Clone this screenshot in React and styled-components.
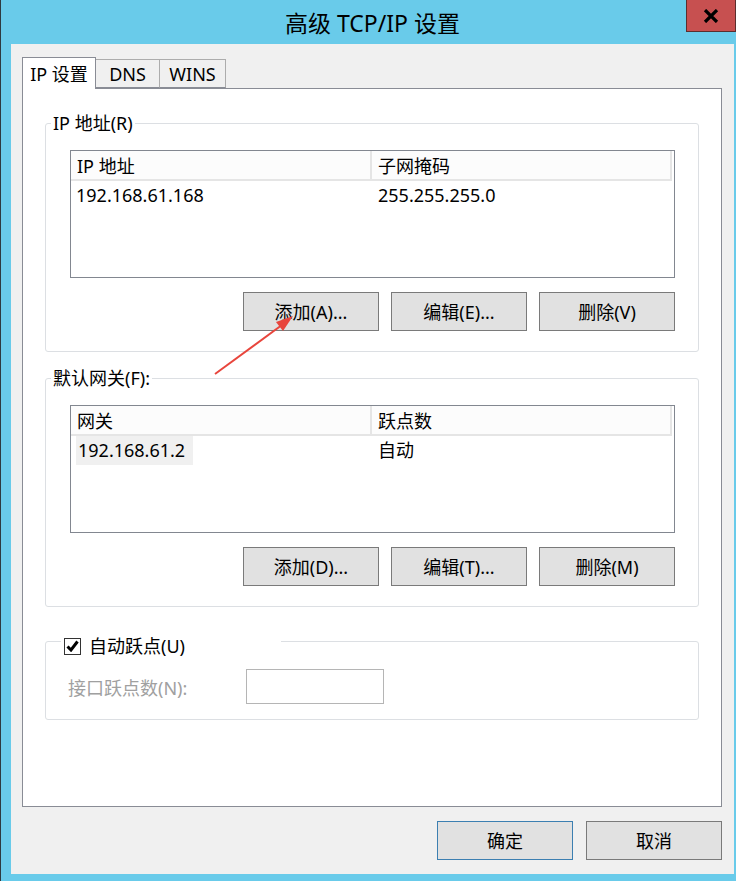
import React from 'react';
import styled, { createGlobalStyle } from 'styled-components';

const GlobalStyle = createGlobalStyle`
  html, body {
    margin: 0;
    padding: 0;
    background: #69cbea;
  }
  body {
    font-family: "Noto Sans", "Noto Sans CJK SC", sans-serif;
    color: #000;
  }
`;

const Window = styled.div`
  position: relative;
  width: 736px;
  height: 881px;
  box-sizing: border-box;
  border-left: 1px solid #2e3a40;
  background: #69cbea;
  overflow: hidden;
`;

const TitleBar = styled.div`
  height: 44px;
  display: flex;
  align-items: center;
  justify-content: center;
  padding-left: 8px;
  font-size: 23px;
`;

const CloseButton = styled.div`
  position: absolute;
  top: 0;
  right: 0;
  width: 50px;
  height: 32px;
  box-sizing: border-box;
  background: #c75050;
  border: 1px solid #5b2e2e;
  border-top: none;
  display: flex;
  align-items: center;
  justify-content: center;
`;

const Client = styled.div`
  margin-left: 10px;
  width: 723px;
  height: 830px;
  box-sizing: border-box;
  background: #f0f0f0;
  padding: 13px 12px 14px 11px;
  display: flex;
  flex-direction: column;
`;

const TabStrip = styled.div`
  display: flex;
  align-items: flex-end;
  height: 31px;
  position: relative;
  z-index: 1;
`;

const Tab = styled.div`
  box-sizing: border-box;
  width: ${({ $w }) => $w}px;
  height: ${({ $active }) => ($active ? 32 : 29)}px;
  margin-bottom: ${({ $active }) => ($active ? -1 : 0)}px;
  margin-left: ${({ $first }) => ($first ? 0 : -1)}px;
  background: ${({ $active }) => ($active ? '#fff' : '#f0f0f0')};
  border: 1px solid ${({ $active }) => ($active ? '#898c95' : '#acacac')};
  border-bottom: ${({ $active }) => ($active ? 'none' : '1px solid #898c95')};
  display: flex;
  align-items: center;
  justify-content: center;
  font-size: 18px;
  line-height: 1;
  z-index: ${({ $active }) => ($active ? 2 : 1)};
`;

const Panel = styled.div`
  height: 719px;
  box-sizing: border-box;
  border: 1px solid #898c95;
  background: #fff;
  padding: 22px 22px 0 22px;
`;

const Group = styled.fieldset`
  margin: ${({ $top }) => $top}px 0 0 0;
  padding: 0;
  min-width: 0;
  border: 1px solid #dcdfe3;
  border-radius: 3px;
`;

const Legend = styled.legend`
  margin-left: ${({ $offset }) => $offset}px;
  padding: 0 2px;
  width: ${({ $w }) => ($w ? `${$w}px` : 'auto')};
  box-sizing: border-box;
  height: 24px;
  line-height: 24px;
  font-size: 18px;
  display: flex;
  align-items: center;
  gap: 8px;
  position: relative;
  top: ${({ $shift }) => $shift || 0}px;
`;

const GroupBody = styled.div`
  padding: 15px 23px 20px 24px;
`;

const List = styled.div`
  height: 128px;
  box-sizing: border-box;
  border: 1px solid #828790;
  background: #fff;
`;

const HeaderRow = styled.div`
  display: flex;
  height: 30px;
  margin-right: 2px;
  background: #fcfcfc;
  border-bottom: 2px solid #e5e5e5;
  box-sizing: border-box;
`;

const HeaderCell = styled.div`
  box-sizing: border-box;
  width: ${({ $w }) => ($w ? `${$w}px` : 'auto')};
  flex: ${({ $w }) => ($w ? 'none' : 1)};
  border-right: 2px solid #e5e5e5;
  padding-left: 6px;
  font-size: 18px;
  line-height: 31px;
`;

const Row = styled.div`
  display: flex;
  height: 28px;
`;

const Cell = styled.div`
  box-sizing: border-box;
  width: ${({ $w }) => ($w ? `${$w}px` : 'auto')};
  flex: ${({ $w }) => ($w ? 'none' : 1)};
  padding-left: ${({ $w }) => ($w ? 5 : 6)}px;
  font-size: 18px;
  line-height: 29px;
`;

const Selected = styled.span`
  display: inline-block;
  background: #f0f0f0;
  padding: 0 8px 0 2px;
`;

const ButtonRow = styled.div`
  display: flex;
  justify-content: flex-end;
  gap: ${({ $gap }) => $gap}px;
  margin-top: 14px;
`;

const Button = styled.div`
  width: 136px;
  height: 39px;
  box-sizing: border-box;
  background: #e1e1e1;
  border: 1px solid ${({ $default }) => ($default ? '#3c7fb1' : '#7a7a7a')};
  display: flex;
  align-items: center;
  justify-content: center;
  font-size: 18px;
  padding-bottom: 2px;
`;

const CheckBox = styled.span`
  width: 17px;
  height: 17px;
  box-sizing: border-box;
  border: 1px solid #333;
  background: #fff;
  display: inline-flex;
  align-items: center;
  justify-content: center;
  margin-left: 1px;
`;

const FieldRow = styled.div`
  display: flex;
  align-items: center;
  padding: 16px 0 15px 22px;
`;

const FieldLabel = styled.span`
  width: 178px;
  font-size: 18px;
  color: #a0a0a0;
`;

const NumberInput = styled.div`
  width: 138px;
  height: 35px;
  box-sizing: border-box;
  border: 1px solid #b5b5b5;
  background: #fff;
`;

const DialogButtons = styled.div`
  display: flex;
  justify-content: flex-end;
  gap: 13px;
  margin-top: 14px;
`;

const Arrow = styled.svg`
  position: absolute;
  left: 205px;
  top: 305px;
  pointer-events: none;
`;

function AddressList({ head1, head2, rows, selectFirst }) {
  return (
    <List>
      <HeaderRow>
        <HeaderCell $w={301}>{head1}</HeaderCell>
        <HeaderCell>{head2}</HeaderCell>
      </HeaderRow>
      {rows.map(([a, b]) => (
        <Row key={a}>
          <Cell $w={301}>{selectFirst ? <Selected>{a}</Selected> : a}</Cell>
          <Cell>{b}</Cell>
        </Row>
      ))}
    </List>
  );
}

export default function App() {
  return (
    <>
      <GlobalStyle />
      <Window>
        <TitleBar>高级 TCP/IP 设置</TitleBar>
        <CloseButton>
          <svg width="16" height="14" viewBox="0 0 16 14">
            <path d="M2 1 L14 13 M14 1 L2 13" stroke="#000" strokeWidth="3.2" />
          </svg>
        </CloseButton>
        <Client>
          <TabStrip>
            <Tab $first $active $w={74}>IP 设置</Tab>
            <Tab $w={65}>DNS</Tab>
            <Tab $w={67}>WINS</Tab>
          </TabStrip>
          <Panel>
            <Group $top={0}>
              <Legend $offset={5}>IP 地址(R)</Legend>
              <GroupBody>
                <AddressList
                  head1="IP 地址"
                  head2="子网掩码"
                  rows={[['192.168.61.168', '255.255.255.0']]}
                />
                <ButtonRow $gap={12}>
                  <Button>添加(A)...</Button>
                  <Button>编辑(E)...</Button>
                  <Button>删除(V)</Button>
                </ButtonRow>
              </GroupBody>
            </Group>
            <Group $top={14}>
              <Legend $offset={5}>默认网关(F):</Legend>
              <GroupBody>
                <AddressList
                  head1="网关"
                  head2="跃点数"
                  rows={[['192.168.61.2', '自动']]}
                  selectFirst
                />
                <ButtonRow $gap={12}>
                  <Button>添加(D)...</Button>
                  <Button>编辑(T)...</Button>
                  <Button>删除(M)</Button>
                </ButtonRow>
              </GroupBody>
            </Group>
            <Group $top={22}>
              <Legend $offset={15} $w={220} $shift={5}>
                <CheckBox>
                  <svg width="13" height="12" viewBox="0 0 13 12">
                    <path d="M1.5 6.5 L5 10 L11.5 1.5" fill="none" stroke="#000" strokeWidth="3" />
                  </svg>
                </CheckBox>
                自动跃点(U)
              </Legend>
              <FieldRow>
                <FieldLabel>接口跃点数(N):</FieldLabel>
                <NumberInput />
              </FieldRow>
            </Group>
          </Panel>
          <DialogButtons>
            <Button $default>确定</Button>
            <Button>取消</Button>
          </DialogButtons>
        </Client>
        <Arrow width="100" height="80" viewBox="0 0 100 80">
          <line x1="9" y1="69" x2="80" y2="17" stroke="#e8453c" strokeWidth="2" />
          <path d="M87 11 L70 17 L77 26 Z" fill="#e8453c" />
        </Arrow>
      </Window>
    </>
  );
}
